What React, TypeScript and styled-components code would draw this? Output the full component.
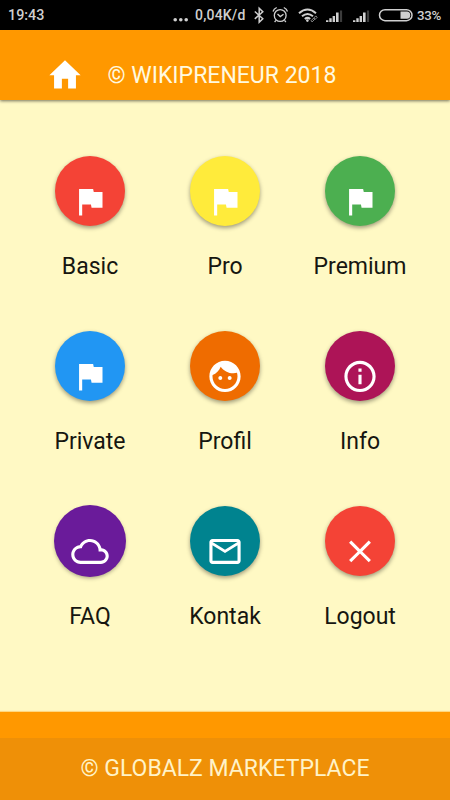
import React from "react";
import styled, { createGlobalStyle } from "styled-components";

const GlobalStyle = createGlobalStyle`
  * { box-sizing: border-box; }
  body { margin: 0; background: #fff9c4; font-family: Roboto, "Liberation Sans", sans-serif; }
`;

const Screen = styled.div`
  width: 450px;
  height: 800px;
  display: flex;
  flex-direction: column;
  overflow: hidden;
  background: #fff9c4;
`;

const StatusBar = styled.div`
  flex: none;
  height: 30px;
  padding: 0 8px 0 8px;
  display: flex;
  align-items: center;
  background: #000;
  color: #cfcfcf;
  font-size: 14px;
  font-weight: 500;
  line-height: 30px;
  white-space: nowrap;
`;

const Clock = styled.span`
  flex: 1;
  font-size: 14.3px;
`;

const StatusIcons = styled.svg`
  display: block;
  width: 163px;
  height: 30px;
`;

const Dots = styled.svg`
  width: 16px;
  height: 30px;
  margin-right: 6px;
`;

const Speed = styled.span`
  width: 57px;
  letter-spacing: 0.2px;
`;

const Battery = styled.span`
  width: 25px;
  margin-left: 2px;
  padding-top: 1px;
  font-size: 13.3px;
  letter-spacing: -0.3px;
`;

const AppBar = styled.header`
  flex: none;
  height: 70px;
  padding: 18px 0 0 46px;
  display: flex;
  align-items: center;
  background: #ff9800;
  color: #fffae0;
  box-shadow: 0 1px 3px rgba(0, 0, 0, 0.55);
  z-index: 1;
`;

const Title = styled.h1`
  margin: 3px 0 0 23.5px;
  font-size: 23px;
  font-weight: 400;
  line-height: 30px;
  white-space: nowrap;
`;

const Glyph = styled.svg`
  display: block;
  flex: none;
  width: 38px;
  height: 38px;
  fill: #fff;
`;

const Menu = styled.main`
  flex: 1;
  padding: 56px 22.5px 0;
  display: grid;
  grid-template-columns: repeat(3, 135px);
  grid-auto-rows: 175px;
`;

const MenuItem = styled.div`
  display: flex;
  flex-direction: column;
  align-items: center;
`;

const Disc = styled.div<{ $color: string; $ring?: boolean }>`
  flex: none;
  width: 70px;
  height: 70px;
  padding-top: 26px;
  display: flex;
  justify-content: center;
  border-radius: 50%;
  background: ${(p) => p.$color};
  box-shadow: ${(p) => (p.$ring ? `0 0 0 1px ${p.$color}, ` : "")}0 2px 4px rgba(0, 0, 0, 0.38);
`;

const Label = styled.span`
  margin-top: 26px;
  color: #161610;
  font-size: 23px;
  line-height: 30px;
`;

const Footer = styled.footer`
  flex: none;
  height: 88px;
  padding-top: 25.5px;
  background: #ff9800;
  box-shadow: 0 -1px 1px rgba(255, 152, 0, 0.35);
`;

const Copyright = styled.div`
  height: 62.5px;
  display: flex;
  justify-content: center;
  background: #ef9007;
  color: #fff3c8;
  font-size: 23px;
  line-height: 62px;
  white-space: nowrap;
`;

const icons = {
  home: "M10 21v-6.2h4V21h5v-8.4h3L12 3 2 12.6h3V21z",
  flag: "M14.4 6L14 4H5v17h2v-7h5.6l.4 2h7V6z",
  face: "M9 11.75c-.69 0-1.25.56-1.25 1.25s.56 1.25 1.25 1.25 1.25-.56 1.25-1.25-.56-1.25-1.25-1.25zm6 0c-.69 0-1.25.56-1.25 1.25s.56 1.25 1.25 1.25 1.25-.56 1.25-1.25-.56-1.25-1.25-1.25zM12 2C6.48 2 2 6.48 2 12s4.48 10 10 10 10-4.48 10-10S17.52 2 12 2zm0 18c-4.41 0-8-3.59-8-8 0-.29.02-.58.05-.86 2.36-1.05 4.23-2.98 5.21-5.37C11.07 8.33 14.05 10 17.42 10c.78 0 1.53-.09 2.25-.26.21.71.33 1.47.33 2.26 0 4.41-3.59 8-8 8z",
  info: "M11 7h2v2h-2zm0 4h2v6h-2zm1-9C6.48 2 2 6.48 2 12s4.48 10 10 10 10-4.48 10-10S17.52 2 12 2zm0 18c-4.41 0-8-3.59-8-8s3.59-8 8-8 8 3.59 8 8-3.59 8-8 8z",
  cloud: "M19.35 10.04C18.67 6.59 15.64 4 12 4 9.11 4 6.6 5.64 5.35 8.04 2.34 8.36 0 10.91 0 14c0 3.31 2.69 6 6 6h13c2.76 0 5-2.24 5-5 0-2.64-2.05-4.78-4.65-4.96zM19 18H6c-2.21 0-4-1.79-4-4s1.79-4 4-4h.71C7.37 7.69 9.48 6 12 6c3.04 0 5.5 2.46 5.5 5.5v.5H19c1.66 0 3 1.34 3 3s-1.34 3-3 3z",
  mail: "M20 4H4c-1.1 0-1.99.9-1.99 2L2 18c0 1.1.9 2 2 2h16c1.1 0 2-.9 2-2V6c0-1.1-.9-2-2-2zm0 14H4V8l8 5 8-5v10zm-8-7L4 6h16l-8 5z",
  close: "M19 6.41L17.59 5 12 10.59 6.41 5 5 6.41 10.59 12 5 17.59 6.41 19 12 13.41 17.59 19 19 17.59 13.41 12z",
};

type IconName = keyof typeof icons;

const Icon = ({ name }: { name: IconName }) => (
  <Glyph viewBox="-0.16 -0.4 24.32 24.32">
    <path d={icons[name]} />
  </Glyph>
);

const items: { label: string; color: string; icon: IconName; ring?: boolean }[] = [
  { label: "Basic", color: "#f44336", icon: "flag" },
  { label: "Pro", color: "#ffeb3b", icon: "flag" },
  { label: "Premium", color: "#4caf50", icon: "flag" },
  { label: "Private", color: "#2196f3", icon: "flag" },
  { label: "Profil", color: "#ef6c00", icon: "face" },
  { label: "Info", color: "#ad1457", icon: "info" },
  { label: "FAQ", color: "#6a1b9a", icon: "cloud", ring: true },
  { label: "Kontak", color: "#00838f", icon: "mail" },
  { label: "Logout", color: "#f44336", icon: "close" },
];

const Signal = ({ x }: { x: number }) => (
  <g transform={`translate(${x} 0)`}>
    <path d="M0 20.3h2.4V22H0zM3.3 18.3h2.4V22H3.3zM6.6 16h2.4v6H6.6zM10 12.6h2.6V22H10z" fill="#d0d0d0" />
    <path d="M13.9 10.5h2.2V22h-2.2z" fill="#3c3c3c" />
  </g>
);

const SystemIcons = () => (
  <StatusIcons viewBox="252 0 163 30" fill="none" stroke="#cfcfcf">
    <path d="M254.8 11.5l8 7.2-3.6 3.5V8.3l3.6 3.4-8 7.2" strokeWidth="1.5" />
    <circle cx="280.2" cy="15.5" r="5.9" strokeWidth="1.3" />
    <path d="M277.5 14l2.8 2.6 3.2-2.4M273 11.5q.8-2.7 3.7-4M283.8 7.5q2.9 1.3 3.7 4M276 20.3l-1.4 1.7M284.5 20.3l1.4 1.7" strokeWidth="1.3" />
    <path d="M299 13.2q8.5-7.4 17 0M302 16.3q5.5-4.6 11 0M304.8 19q2.7-2.2 5.4 0" strokeWidth="2" />
    <circle cx="307.4" cy="20.6" r="1.3" fill="#cfcfcf" stroke="none" />
    <path d="M311 20.8l2.8-2.8 1.1 1.1-2.8 2.8zM313.4 18.4l2.4-2.5 1.4 1.4-2.5 2.5" strokeWidth=".9" stroke="#999" />
    <g stroke="none">
      <Signal x={326} />
      <Signal x={353} />
    </g>
    <rect x="379.5" y="9.7" width="32.5" height="11" rx="5.5" strokeWidth="1.5" />
    <path d="M400.5 11.6h6.5q3.2 0 3.2 3.6t-3.2 3.6h-6.5z" fill="#cfcfcf" stroke="none" />
  </StatusIcons>
);

export default function App() {
  return (
    <>
      <GlobalStyle />
      <Screen>
        <StatusBar>
          <Clock>19:43</Clock>
          <Dots viewBox="0 0 16 30" fill="#cfcfcf">
            <circle cx="2.2" cy="19.8" r="1.8" />
            <circle cx="7.8" cy="19.8" r="1.8" />
            <circle cx="13.2" cy="19.8" r="1.8" />
          </Dots>
          <Speed>0,04K/d</Speed>
          <SystemIcons />
          <Battery>33%</Battery>
        </StatusBar>
        <AppBar>
          <Icon name="home" />
          <Title>© WIKIPRENEUR 2018</Title>
        </AppBar>
        <Menu>
          {items.map((item) => (
            <MenuItem key={item.label}>
              <Disc $color={item.color} $ring={item.ring}>
                <Icon name={item.icon} />
              </Disc>
              <Label>{item.label}</Label>
            </MenuItem>
          ))}
        </Menu>
        <Footer>
          <Copyright>© GLOBALZ MARKETPLACE</Copyright>
        </Footer>
      </Screen>
    </>
  );
}
